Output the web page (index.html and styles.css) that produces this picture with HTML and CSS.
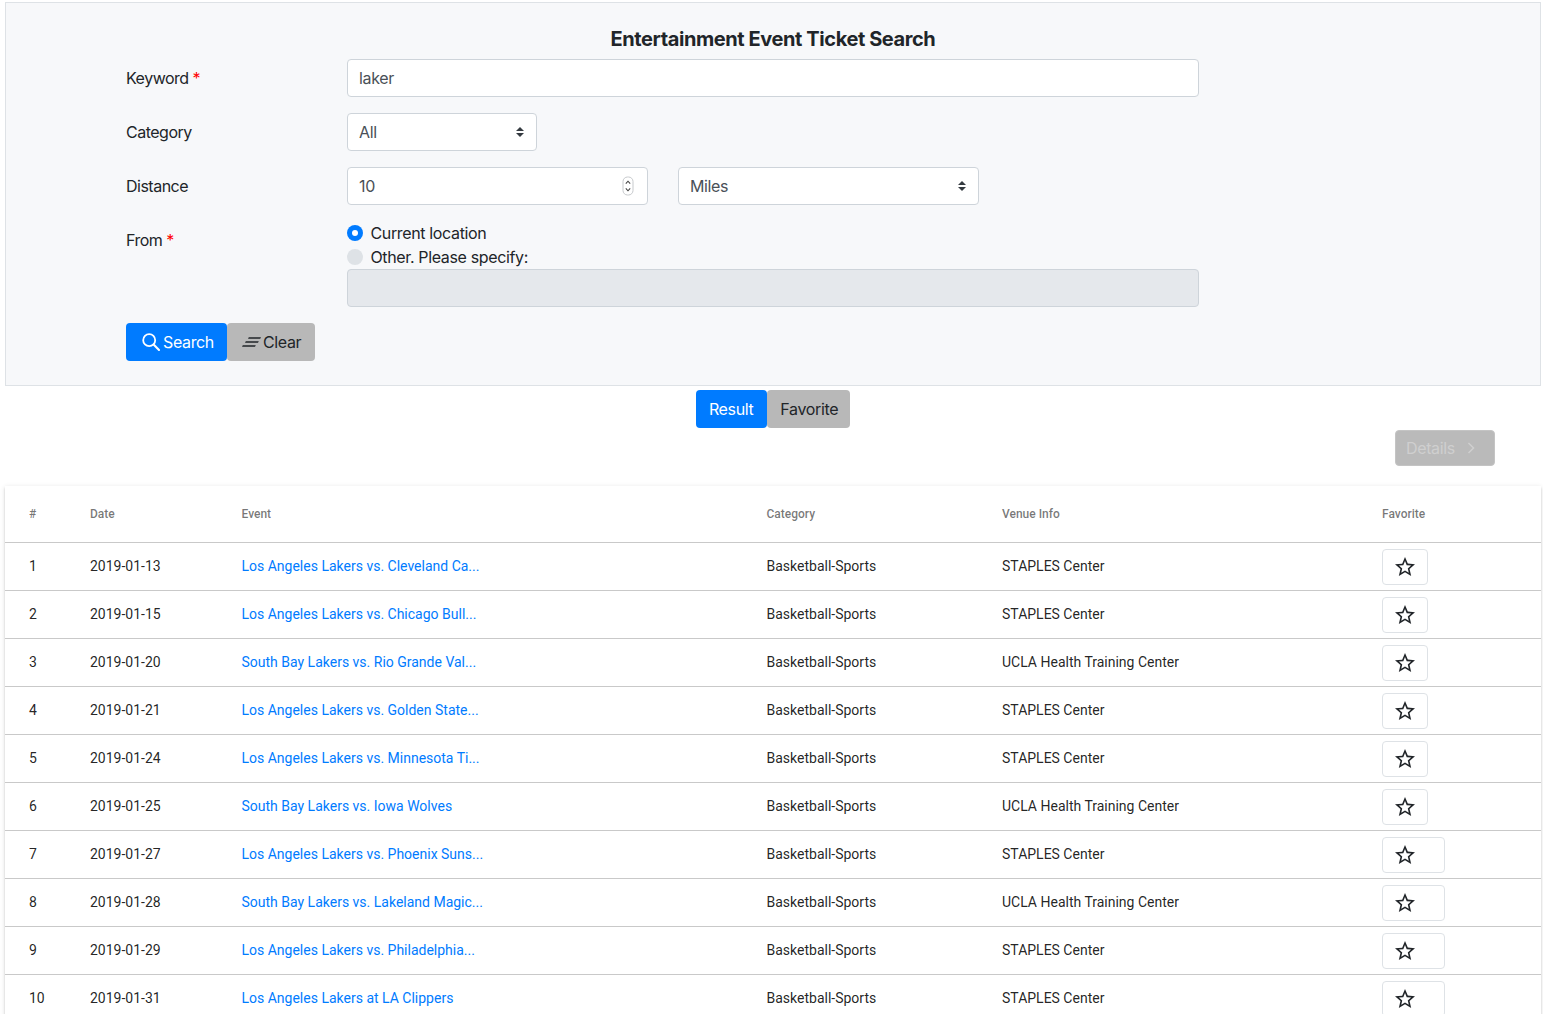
FILE: index.html
```html
<!DOCTYPE html>
<html lang="en">
<head>
<meta charset="utf-8">
<title>Entertainment Event Ticket Search</title>
<link rel="stylesheet" href="styles.css">
</head>
<body>
<div class="page">
  <form class="panel">
    <h1 class="title">Entertainment Event Ticket Search</h1>
    <div class="row">
      <label class="lbl">Keyword <span class="req">*</span></label>
      <input class="ctl wide" type="text" value="laker">
    </div>
    <div class="row">
      <label class="lbl">Category</label>
      <select class="ctl sel sel-cat"><option>All</option></select>
    </div>
    <div class="row">
      <label class="lbl">Distance</label>
      <div class="num-wrap">
        <input class="ctl num" type="text" value="10">
        <svg class="spin" width="12" height="20" viewBox="0 0 12 20"><rect x="1" y="1" width="10" height="18" rx="4.5" fill="#fff" stroke="#c6c9cc"/><path d="M3.8 7.6 6 5.2l2.2 2.4M3.8 12.4 6 14.8l2.2-2.4" fill="none" stroke="#444" stroke-width="1.1"/></svg>
      </div>
      <select class="ctl sel sel-unit"><option>Miles</option></select>
    </div>
    <div class="row from">
      <label class="lbl lbl-from">From <span class="req">*</span></label>
      <div class="from-col">
        <div class="radio-line"><span class="radio on"></span><span>Current location</span></div>
        <div class="radio-line"><span class="radio"></span><span>Other. Please specify:</span></div>
        <input class="ctl wide off" type="text" disabled>
      </div>
    </div>
    <div class="btns">
      <button type="button" class="btn blue btn-search">
        <svg width="20" height="20" viewBox="0 0 20 20"><circle cx="8.2" cy="8.2" r="6" fill="none" stroke="#fff" stroke-width="1.8"/><path d="m12.6 12.6 5.4 5.4" stroke="#fff" stroke-width="2.1" stroke-linecap="round"/></svg>
        <span>Search</span>
      </button>
      <button type="button" class="btn gray btn-clear">
        <svg width="20" height="12" viewBox="0 0 20 12"><path d="M6.800 1.200h12.200l-.8 1.600H6zM3.800 5.200h13l-.8 1.600H3zM.8 9.200h13l-.8 1.600H0z" fill="#212529"/></svg>
        <span>Clear</span>
      </button>
    </div>
  </form>

  <div class="tabs">
    <button type="button" class="btn blue tab">Result</button>
    <button type="button" class="btn gray tab tab-fav">Favorite</button>
  </div>

  <div class="details-row">
    <button type="button" class="details">Details
      <svg width="12" height="14" viewBox="0 0 12 14"><path d="m3.500 2 5 5-5 5" fill="none" stroke="#cfcfcf" stroke-width="1.500"/></svg>
    </button>
  </div>

  <table class="tbl">
    <colgroup>
      <col class="c1"><col class="c2"><col class="c3"><col class="c4"><col class="c5"><col class="c6">
    </colgroup>
    <thead>
      <tr><th>#</th><th>Date</th><th>Event</th><th>Category</th><th>Venue Info</th><th>Favorite</th></tr>
    </thead>
    <tbody>
      <tr><td>1</td><td>2019-01-13</td><td><a href="#">Los Angeles Lakers vs. Cleveland Ca...</a></td><td>Basketball-Sports</td><td>STAPLES Center</td><td><button type="button" class="star"><svg width="24" height="24" viewBox="0 0 24 24"><path d="M22 9.240l-7.190-.62L12 2 9.190 8.630 2 9.240l5.460 4.730L5.820 21 12 17.270 18.180 21l-1.630-7.030L22 9.240zM12 15.400l-3.760 2.270 1-4.280-3.320-2.880 4.380-.38L12 6.100l1.710 4.040 4.380.38-3.320 2.880 1 4.280L12 15.400z"/></svg></button></td></tr>
      <tr><td>2</td><td>2019-01-15</td><td><a href="#">Los Angeles Lakers vs. Chicago Bull...</a></td><td>Basketball-Sports</td><td>STAPLES Center</td><td><button type="button" class="star"><svg width="24" height="24" viewBox="0 0 24 24"><path d="M22 9.240l-7.190-.62L12 2 9.190 8.630 2 9.240l5.460 4.730L5.820 21 12 17.270 18.180 21l-1.630-7.030L22 9.240zM12 15.400l-3.760 2.270 1-4.280-3.320-2.880 4.380-.38L12 6.100l1.710 4.040 4.380.38-3.320 2.880 1 4.280L12 15.400z"/></svg></button></td></tr>
      <tr><td>3</td><td>2019-01-20</td><td><a href="#">South Bay Lakers vs. Rio Grande Val...</a></td><td>Basketball-Sports</td><td>UCLA Health Training Center</td><td><button type="button" class="star"><svg width="24" height="24" viewBox="0 0 24 24"><path d="M22 9.240l-7.190-.62L12 2 9.190 8.630 2 9.240l5.460 4.730L5.820 21 12 17.270 18.180 21l-1.630-7.030L22 9.240zM12 15.400l-3.760 2.270 1-4.280-3.320-2.880 4.380-.38L12 6.100l1.710 4.040 4.380.38-3.320 2.880 1 4.280L12 15.400z"/></svg></button></td></tr>
      <tr><td>4</td><td>2019-01-21</td><td><a href="#">Los Angeles Lakers vs. Golden State...</a></td><td>Basketball-Sports</td><td>STAPLES Center</td><td><button type="button" class="star"><svg width="24" height="24" viewBox="0 0 24 24"><path d="M22 9.240l-7.190-.62L12 2 9.190 8.630 2 9.240l5.460 4.730L5.820 21 12 17.270 18.180 21l-1.630-7.030L22 9.240zM12 15.400l-3.760 2.270 1-4.280-3.320-2.880 4.380-.38L12 6.100l1.710 4.040 4.380.38-3.320 2.880 1 4.280L12 15.400z"/></svg></button></td></tr>
      <tr><td>5</td><td>2019-01-24</td><td><a href="#">Los Angeles Lakers vs. Minnesota Ti...</a></td><td>Basketball-Sports</td><td>STAPLES Center</td><td><button type="button" class="star"><svg width="24" height="24" viewBox="0 0 24 24"><path d="M22 9.240l-7.190-.62L12 2 9.190 8.630 2 9.240l5.460 4.730L5.820 21 12 17.270 18.180 21l-1.630-7.030L22 9.240zM12 15.400l-3.760 2.270 1-4.280-3.320-2.880 4.380-.38L12 6.100l1.710 4.040 4.380.38-3.320 2.880 1 4.280L12 15.400z"/></svg></button></td></tr>
      <tr><td>6</td><td>2019-01-25</td><td><a href="#">South Bay Lakers vs. Iowa Wolves</a></td><td>Basketball-Sports</td><td>UCLA Health Training Center</td><td><button type="button" class="star"><svg width="24" height="24" viewBox="0 0 24 24"><path d="M22 9.240l-7.190-.62L12 2 9.190 8.630 2 9.240l5.460 4.730L5.820 21 12 17.270 18.180 21l-1.630-7.030L22 9.240zM12 15.400l-3.760 2.270 1-4.280-3.320-2.880 4.380-.38L12 6.100l1.710 4.040 4.380.38-3.320 2.880 1 4.280L12 15.400z"/></svg></button></td></tr>
      <tr><td>7</td><td>2019-01-27</td><td><a href="#">Los Angeles Lakers vs. Phoenix Suns...</a></td><td>Basketball-Sports</td><td>STAPLES Center</td><td><button type="button" class="star star-wide"><svg width="24" height="24" viewBox="0 0 24 24"><path d="M22 9.240l-7.190-.62L12 2 9.190 8.630 2 9.240l5.460 4.730L5.820 21 12 17.270 18.180 21l-1.630-7.030L22 9.240zM12 15.400l-3.760 2.270 1-4.280-3.320-2.880 4.380-.38L12 6.100l1.710 4.040 4.380.38-3.320 2.880 1 4.280L12 15.400z"/></svg></button></td></tr>
      <tr><td>8</td><td>2019-01-28</td><td><a href="#">South Bay Lakers vs. Lakeland Magic...</a></td><td>Basketball-Sports</td><td>UCLA Health Training Center</td><td><button type="button" class="star star-wide"><svg width="24" height="24" viewBox="0 0 24 24"><path d="M22 9.240l-7.190-.62L12 2 9.190 8.630 2 9.240l5.460 4.730L5.820 21 12 17.270 18.180 21l-1.630-7.030L22 9.240zM12 15.400l-3.760 2.270 1-4.280-3.320-2.880 4.380-.38L12 6.100l1.710 4.040 4.380.38-3.320 2.880 1 4.280L12 15.400z"/></svg></button></td></tr>
      <tr><td>9</td><td>2019-01-29</td><td><a href="#">Los Angeles Lakers vs. Philadelphia...</a></td><td>Basketball-Sports</td><td>STAPLES Center</td><td><button type="button" class="star star-wide"><svg width="24" height="24" viewBox="0 0 24 24"><path d="M22 9.240l-7.190-.62L12 2 9.190 8.630 2 9.240l5.460 4.730L5.820 21 12 17.270 18.180 21l-1.630-7.030L22 9.240zM12 15.400l-3.760 2.270 1-4.280-3.320-2.880 4.380-.38L12 6.100l1.710 4.040 4.380.38-3.320 2.880 1 4.280L12 15.400z"/></svg></button></td></tr>
      <tr><td>10</td><td>2019-01-31</td><td><a href="#">Los Angeles Lakers at LA Clippers</a></td><td>Basketball-Sports</td><td>STAPLES Center</td><td><button type="button" class="star star-wide"><svg width="24" height="24" viewBox="0 0 24 24"><path d="M22 9.240l-7.190-.62L12 2 9.190 8.630 2 9.240l5.460 4.730L5.820 21 12 17.270 18.180 21l-1.630-7.030L22 9.240zM12 15.400l-3.760 2.270 1-4.280-3.320-2.880 4.380-.38L12 6.100l1.710 4.040 4.380.38-3.320 2.880 1 4.280L12 15.400z"/></svg></button></td></tr>
    </tbody>
  </table>
</div>
</body>
</html>
```

FILE: styles.css
```css
* { box-sizing: border-box; }
html, body { margin: 0; height: 100%; overflow: hidden; background: #fff; }
body { font-family: Inter, "Liberation Sans", sans-serif; font-size: 16px; line-height: 24px; color: #212529; letter-spacing: -0.36px; }
.page { padding: 2px 2px 0 5px; }

.panel { background: #f7f8fa; border: 1px solid #dee2e6; padding: 24px 0 24px 120px; height: 384px; }
.title { margin: 0 0 8px; text-align: center; font-size: 20px; line-height: 25px; height: 24px; font-weight: 700; padding-right: 120px; letter-spacing: -0.41px; }
.row { display: flex; align-items: flex-start; margin-bottom: 16px; }
.lbl { width: 221px; flex: none; line-height: 38px; letter-spacing: -0.5px; }
.req { color: #f00; }

.ctl { display: block; height: 38px; padding: 6px 12px 6px 11px; font: inherit; letter-spacing: inherit; color: #495057; background: #fff; border: 1px solid #ced4da; border-radius: 4px; outline: none; }
.wide { width: 852px; }
.off { background: #e5e8ec; }
.sel { appearance: none; -webkit-appearance: none; background: #fff url("data:image/svg+xml,%3Csvg xmlns='http://www.w3.org/2000/svg' width='8' height='10' viewBox='0 0 4 5'%3E%3Cpath fill='%23343a40' d='M2 0 0 2h4zm0 5L0 3h4z'/%3E%3C/svg%3E") no-repeat right 12px center / 8px 10px; }
.sel-cat { width: 190px; }
.sel-unit { width: 301px; margin-left: 30px; }
.num-wrap { position: relative; width: 301px; }
.num { width: 100%; }
.spin { position: absolute; right: 14px; top: 9px; }

.from-col { width: 852px; }
.radio-line { display: flex; align-items: center; gap: 7.5px; height: 24px; }
.radio { width: 16px; height: 16px; border-radius: 50%; background: #dee2e6; flex: none; }
.radio.on { background: #007bff; display: flex; align-items: center; justify-content: center; }
.radio.on::after { content: ""; width: 6px; height: 6px; border-radius: 50%; background: #fff; }

.btns { display: flex; }
.btn { height: 38px; border: 0; border-radius: 4px; font: inherit; letter-spacing: inherit; display: flex; align-items: center; }
.blue { background: #007bff; color: #fff; }
.gray { background: #b8b8b8; color: #212529; }
.btn-search { padding: 0 13px 0 15px; gap: 2px; }
.btn-clear { padding: 0 14px 0 15px; gap: 1px; }

.tabs { display: flex; justify-content: center; margin-top: 4px; }
.tab { padding: 0 14px 0 13px; }
.tab-fav { padding: 0 12px 0 13px; }

.details-row { display: flex; justify-content: flex-end; margin: 2px 46px 0 0; }
.details { width: 100px; height: 36px; padding: 0 10px; display: flex; align-items: center; gap: 10px; background: #bababa; color: #cfcfcf; border: 1px solid #c4c4c4; border-radius: 4px; font: inherit; letter-spacing: inherit; }

.tbl { width: 1536px; margin-top: 20px; table-layout: fixed; border-collapse: separate; border-spacing: 0; background: #fff; box-shadow: 0 3px 1px -2px rgba(0,0,0,.2), 0 2px 2px 0 rgba(0,0,0,.14), 0 1px 5px 0 rgba(0,0,0,.12); font-family: Roboto, "Liberation Sans", sans-serif; letter-spacing: 0; }
.c1 { width: 85px; } .c2 { width: 151.5px; } .c3 { width: 525px; } .c4 { width: 235.5px; } .c5 { width: 380px; } .c6 { width: 159px; }
.tbl th { height: 57px; padding: 0; text-align: left; font-size: 12px; font-weight: 500; color: rgba(0,0,0,.54); border-bottom: 1px solid #c9c9c9; }
.tbl td { height: 48px; padding: 0 0 2px; font-size: 14px; line-height: 20px; color: rgba(0,0,0,.87); border-bottom: 1px solid #c9c9c9; }
.tbl th:first-child, .tbl td:first-child { padding-left: 24px; }
.tbl td:last-child { padding-bottom: 0; }
.tbl a { color: #007bff; text-decoration: none; }

.star { display: flex; align-items: center; width: 46px; height: 36px; padding: 0 0 0 10px; background: #fff; border: 1px solid #dee2e6; border-radius: 4px; }
.star-wide { width: 63px; }
.star svg { fill: #212529; display: block; }
```
